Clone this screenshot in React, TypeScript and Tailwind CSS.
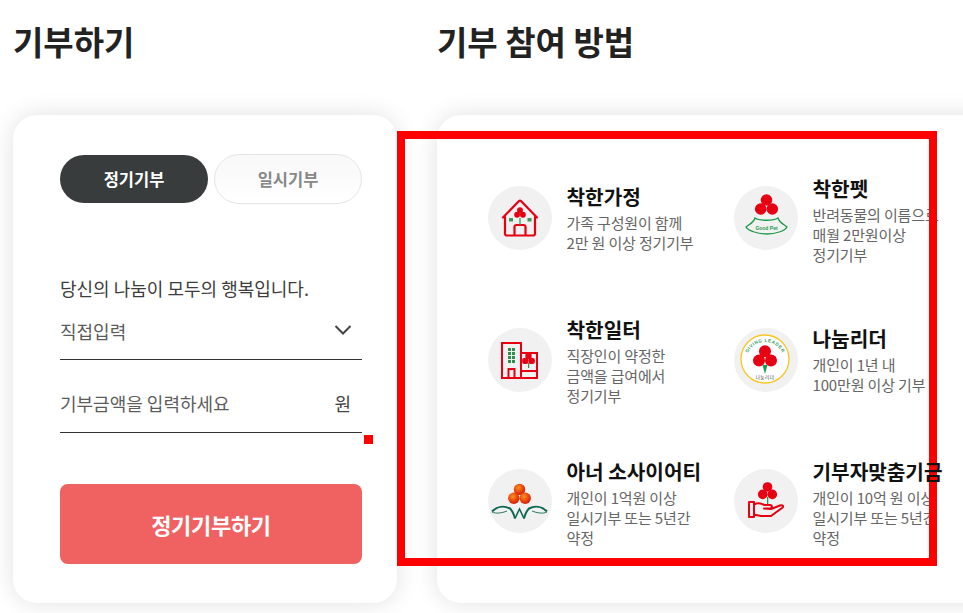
const FONT = "font-['Noto_Sans_CJK_KR','Noto_Sans',sans-serif]";

function Berries({ x, y, r, fill = "#e60012" }: { x: number; y: number; r: number; fill?: string }) {
  return (
    <g fill={fill}>
      <circle cx={x} cy={y - r * 0.95} r={r} />
      <circle cx={x - r} cy={y + r * 0.6} r={r} />
      <circle cx={x + r} cy={y + r * 0.6} r={r} />
    </g>
  );
}

function HouseIcon() {
  return (
    <svg viewBox="0 0 64 64" className="size-16">
      <path d="M17 31v16.500a2 2 0 0 0 2 2h26a2 2 0 0 0 2-2V31M15 31.500 31 15a1.500 1.500 0 0 1 2 0l16 16.500M26.500 49.500V41a2 2 0 0 1 2-2h7a2 2 0 0 1 2 2v8.500" fill="none" stroke="#e60012" strokeWidth="2.200" strokeLinecap="round" strokeLinejoin="round" />
      <Berries x={32} y={27} r={2.900} />
      <path d="M32 32v7" stroke="#1e9b48" strokeWidth="1.200" />
      <rect x="21" y="32" width="4" height="3.500" fill="#3d9a5c" />
      <rect x="39.500" y="32" width="4" height="3.500" fill="#3d9a5c" />
    </svg>
  );
}

function PetIcon() {
  return (
    <svg viewBox="0 0 64 64" className="size-16">
      <Berries x={32.500} y={19.500} r={5.800} />
      <path d="M21 32c4 3 19 3 23 0 1 4 5 6 9 9-2 4-12 7-20 7s-19-3-21-7c4-3 8-5 9-9Z" fill="none" stroke="#1e9b48" strokeWidth="1.300" />
      <text x="32.500" y="43.500" textAnchor="middle" fontSize="5" fontWeight="700" fill="#1e9b48" fontFamily="Liberation Sans, sans-serif">Good Pet</text>
    </svg>
  );
}

function OfficeIcon() {
  return (
    <svg viewBox="0 0 64 64" className="size-16">
      <path d="M14 15h19v35H14ZM33 25h16v25H33ZM33 43h16M20.500 50v-9h6v9" fill="none" stroke="#e60012" strokeWidth="2" strokeLinejoin="miter" />
      <g fill="#2f8f4e">
        <rect x="20" y="20" width="3" height="3" /><rect x="24" y="20" width="3" height="3" />
        <rect x="20" y="24" width="3" height="3" /><rect x="24" y="24" width="3" height="3" />
        <rect x="20" y="28" width="3" height="3" /><rect x="24" y="28" width="3" height="3" />
        <rect x="20" y="32" width="3" height="3" /><rect x="24" y="32" width="3" height="3" />
        <rect x="40" y="35" width="1.200" height="5" />
      </g>
      <Berries x={40.500} y={31} r={3.200} />
    </svg>
  );
}

function LeaderIcon() {
  return (
    <svg viewBox="0 0 64 64" className="size-16">
      <circle cx="31" cy="31" r="24" fill="#fff" stroke="#f7c61c" strokeWidth="1.300" />
      <defs>
        <path id="lead-arc" d="M12 33a19 19 0 0 1 38 0" />
      </defs>
      <text fontSize="4.600" fontWeight="700" fill="#2f9a5a" letterSpacing="0.500" fontFamily="Liberation Sans, sans-serif">
        <textPath href="#lead-arc" startOffset="50%" textAnchor="middle">GIVING LEADER</textPath>
      </text>
      <Berries x={31} y={29} r={6} />
      <path d="M28.500 37h5L31 46Z" fill="#1e9b48" />
      <text x="31" y="51" textAnchor="middle" fontSize="4.500" letterSpacing="0.500" fill="#333" className="font-['Noto_Sans_CJK_KR']">나눔리더</text>
    </svg>
  );
}

function HonorIcon() {
  return (
    <svg viewBox="0 0 64 64" className="size-16">
      <defs>
        <radialGradient id="honor-berry" cx="40%" cy="35%" r="70%">
          <stop offset="0%" stopColor="#f7931e" />
          <stop offset="70%" stopColor="#e8340c" />
          <stop offset="100%" stopColor="#c81e08" />
        </radialGradient>
      </defs>
      <Berries x={31.500} y={25.800} r={5.700} fill="url(#honor-berry)" />
      <g fill="none" stroke="#0f6a55">
        <path d="M4 42.500c5-5 12-6 18-3 2 2 4 6 5 10" strokeWidth="2" />
        <path d="M59 42.500c-5-5-12-6-18-3-2 2-4 6-5 10" strokeWidth="2" />
        <path d="M27 49.500 31.500 40 36 49.500" strokeWidth="1.600" />
        <path d="M4 43c4 2 10 1 15-1M59 43c-4 2-10 1-15-1" strokeWidth="0.900" />
      </g>
    </svg>
  );
}

function FundIcon() {
  return (
    <svg viewBox="0 0 64 64" className="size-16">
      <Berries x={33.500} y={22.500} r={4.800} />
      <path d="M33 28h1.300v7H33Z" fill="#1e9b48" />
      <path d="M15 33h5v15h-5ZM20 35.500c4-2 7-1.500 10 .5h6c2.500 0 2.500 3.500 0 3.500h-6l7 .5 9-3.500c3-1 4 1 2 2.500L37 47H27l-7-1.500" fill="none" stroke="#e60012" strokeWidth="2" strokeLinejoin="round" />
    </svg>
  );
}

const methods = [
  { icon: <HouseIcon />, title: "착한가정", lines: ["가족 구성원이 함께", "2만 원 이상 정기기부"] },
  { icon: <PetIcon />, title: "착한펫", lines: ["반려동물의 이름으로", "매월 2만원이상", "정기기부"] },
  { icon: <OfficeIcon />, title: "착한일터", lines: ["직장인이 약정한", "금액을 급여에서", "정기기부"] },
  { icon: <LeaderIcon />, title: "나눔리더", lines: ["개인이 1년 내", "100만원 이상 기부"] },
  { icon: <HonorIcon />, title: "아너 소사이어티", lines: ["개인이 1억원 이상", "일시기부 또는 5년간", "약정"] },
  { icon: <FundIcon />, title: "기부자맞춤기금", lines: ["개인이 10억 원 이상", "일시기부 또는 5년간", "약정"] },
];

function MethodItem({ icon, title, lines }: { icon: React.ReactNode; title: string; lines: string[] }) {
  return (
    <div className="flex h-[100px] items-center gap-[14.500px]">
      <div className="size-16 shrink-0 rounded-full bg-[#f1f1f1]">{icon}</div>
      <div className={lines.length === 3 ? "min-w-0 whitespace-nowrap pt-[3px]" : "min-w-0 whitespace-nowrap"}>
        <p className="relative z-10 mb-[2px] text-[20.200px] leading-[28px] font-bold text-[#111]">{title}</p>
        {lines.map((line) => (
          <p key={line} className="text-[15px] leading-[20px] tracking-[-0.15px] text-[#666]">{line}</p>
        ))}
      </div>
    </div>
  );
}

export default function App() {
  return (
    <div className={`relative flex h-[613px] w-[963px] gap-[40px] overflow-hidden bg-white pl-[13px] ${FONT}`}>
      <section className="w-[384px] shrink-0">
        <h2 className="mt-[18px] text-[33px] leading-[46px] font-bold text-[#222]">기부하기</h2>
        <div className="mt-[51px] h-[488px] rounded-[24px] bg-white pl-[47px] pr-[35px] pt-[39px] shadow-[0_0_24px_rgba(0,0,0,0.12)]">
          <div className="flex items-center gap-[6px]">
            <button className="h-[48px] w-[148px] rounded-full bg-[#393c3d] text-[16.500px] font-bold text-white">정기기부</button>
            <button className="h-[50px] w-[148px] rounded-full border border-[#e5e5e5] bg-gradient-to-b from-[#f8f8f8] to-white text-[16.500px] font-bold text-[#888]">일시기부</button>
          </div>
          <p className="mt-[70px] text-[18px] leading-[28px] text-[#3c3c3c]">당신의 나눔이 모두의 행복입니다.</p>
          <div className="flex h-[58px] items-start justify-between border-b border-[#333] pr-[10px] pt-[15px]">
            <span className="text-[18px] leading-[28px] text-[#5c5c5c]">직접입력</span>
            <svg viewBox="0 0 18 12" className="mt-[7px] h-[12px] w-[18px]" fill="none" stroke="#444" strokeWidth="2">
              <path d="M1.500 2 9 9.500 16.500 2" />
            </svg>
          </div>
          <div className="mt-[16px] flex h-[57px] items-start justify-between border-b border-[#333] pr-[11px] pt-[13px]">
            <span className="text-[18px] leading-[28px] text-[#5c5c5c]">기부금액을 입력하세요</span>
            <span className="text-[18px] leading-[28px] text-[#444]">원</span>
          </div>
          <button className="mt-[51px] h-[80px] w-full rounded-[8px] bg-[#f06262] text-[22px] font-bold tracking-[-0.3px] text-white">정기기부하기</button>
        </div>
      </section>
      <section className="w-[600px] shrink-0">
        <h2 className="mt-[18px] text-[33px] leading-[46px] font-bold text-[#222]">기부 참여 방법</h2>
        <div className="mt-[51px] h-[488px] rounded-l-[24px] bg-white pl-[51px] pt-[53px] shadow-[0_0_24px_rgba(0,0,0,0.12)]">
          <div className="grid grid-cols-[246px_246px] gap-y-[41.500px]">
            {methods.map((m) => (
              <MethodItem key={m.title} icon={m.icon} title={m.title} lines={m.lines} />
            ))}
          </div>
        </div>
      </section>
      <div className="pointer-events-none absolute left-[397px] top-[131px] h-[435px] w-[540px] border-[8px] border-[#ff0000]" />
      <div className="absolute left-[364px] top-[435px] size-[9px] bg-[#ff0000]" />
    </div>
  );
}
